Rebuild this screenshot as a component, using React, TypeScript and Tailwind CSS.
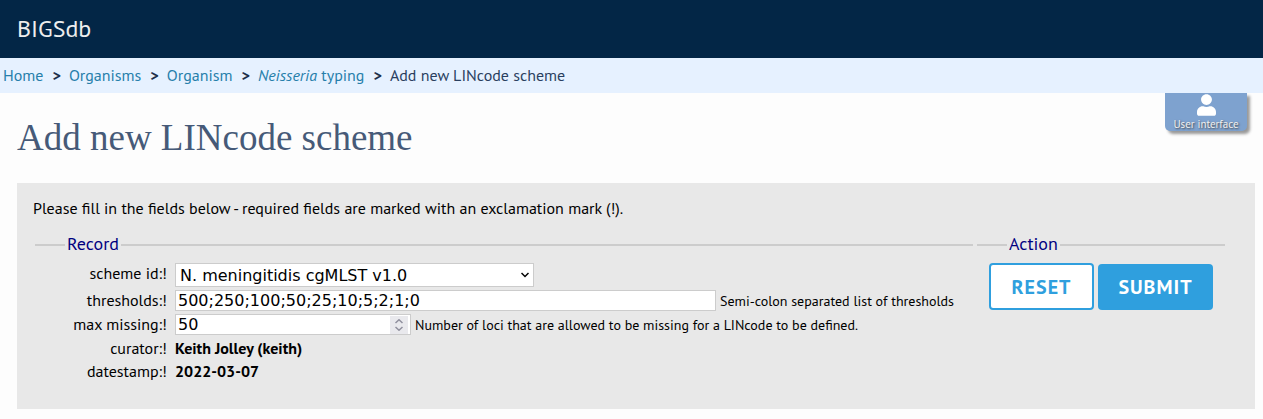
import type { ReactNode } from "react";
import { FaUser } from "react-icons/fa";

const crumbs: { label: ReactNode; key: string }[] = [
  { key: "home", label: "Home" },
  { key: "organisms", label: "Organisms" },
  { key: "organism", label: "Organism" },
  { key: "typing", label: <><i>Neisseria</i> typing</> },
];

function Row({ label, id, children }: { label: string; id?: string; children: ReactNode }) {
  const labelClass = "w-[132px] shrink-0 text-right leading-5";
  return (
    <div className="flex gap-2">
      {id ? (
        <label htmlFor={id} className={labelClass}>{label}:!</label>
      ) : (
        <span className={labelClass}>{label}:!</span>
      )}
      {children}
    </div>
  );
}

function Note({ children }: { children: ReactNode }) {
  return <span className="-ml-1 h-[21px] text-[14px] leading-[23px] whitespace-nowrap">{children}</span>;
}

function Fieldset({ title, className, children }: { title: string; className: string; children: ReactNode }) {
  return (
    <fieldset className={`min-w-0 border-t-2 border-[#ccc] ${className}`}>
      <legend className="ml-[30px] px-0.5 pb-0.5 text-[18px] leading-[22px] text-[#000080]">{title}</legend>
      {children}
    </fieldset>
  );
}

const field = "border border-[#ccc] bg-white font-['DejaVu_Sans',sans-serif] text-[16px] text-black outline-none";

export default function App() {
  return (
    <div className="min-h-screen bg-[#fdfdfd] font-['PT_Sans','Noto_Sans',sans-serif] text-[16px] text-black">
      <header className="flex h-[58px] items-center bg-[#032646] px-[17px] text-[24px] text-[#eee]">
        BIGSdb
      </header>
      <nav aria-label="Breadcrumb" className="flex h-[35px] items-center bg-[#e6f1ff] px-[3px] pb-0.5">
        {crumbs.map((c) => (
          <span key={c.key} className="flex">
            <a href="#" className="text-[#267fab]">{c.label}</a>
            <span className="pr-2 pl-[9px] font-semibold text-[#1e2f4a]">&gt;</span>
          </span>
        ))}
        <span className="text-[#2a3f5f]">Add new LINcode scheme</span>
      </nav>
      <main className="pr-2 pb-2.5 pl-[17px]">
        <div className="flex h-[90px] items-start justify-between pr-2">
          <h1 className="pt-6 font-['Liberation_Serif',serif] text-[37px] leading-[42px] text-[#465a78]">
            Add new LINcode scheme
          </h1>
          <a
            href="#"
            className="flex h-[38px] w-[82px] flex-col items-center rounded-b-[5px] bg-[#7ea2cf] pt-px text-[11px] leading-4 text-[#eee] shadow-[3px_3px_3px_#999] [text-shadow:1px_1px_2px_#444]"
          >
            <FaUser className="h-[22px] w-[19px] shrink-0 text-white" />
            <span className="whitespace-nowrap">User interface</span>
          </a>
        </div>
        <form className="bg-[#e8e8e8] pt-[15px] pr-[30px] pb-7 pl-4" onSubmit={(e) => e.preventDefault()}>
          <p className="leading-5">
            Please fill in the fields below - required fields are marked with an exclamation mark (!).
          </p>
          <div className="flex gap-1 pt-[15px] pl-0.5">
            <Fieldset title="Record" className="flex-1">
              <div className="flex flex-col gap-[3px] pt-1.5">
                <Row label="scheme id" id="scheme">
                  <span className="relative w-[359px]">
                    <select id="scheme" className={`${field} block h-6 w-full appearance-none pl-1`}>
                      <option>N. meningitidis cgMLST v1.0</option>
                    </select>
                    <svg
                      viewBox="0 0 8 6"
                      className="pointer-events-none absolute top-[9px] right-[5px] h-1.5 w-2"
                      fill="none"
                      stroke="#000"
                      strokeWidth="1.5"
                    >
                      <path d="M0.5 1 L4 4.5 L7.5 1" />
                    </svg>
                  </span>
                </Row>
                <Row label="thresholds" id="thresholds">
                  <input id="thresholds" className={`${field} h-[21px] w-[541px] px-0.5`} defaultValue="500;250;100;50;25;10;5;2;1;0" />
                  <Note>Semi-colon separated list of thresholds</Note>
                </Row>
                <Row label="max missing" id="missing">
                  <span className="relative w-[236px]">
                    <input
                      id="missing"
                      type="number"
                      defaultValue={50}
                      className={`${field} block h-[21px] w-full px-0.5 [appearance:textfield]`}
                    />
                    <span className="pointer-events-none absolute top-0.5 right-[3px] flex h-[18px] w-[18px] items-center justify-center bg-[#e9e9ed]">
                      <svg viewBox="0 0 8 12" className="h-3 w-2" fill="none" stroke="#8f8f9d" strokeWidth="1.5">
                        <path d="M0.5 4 L4 0.8 L7.5 4 M0.5 8 L4 11.2 L7.5 8" />
                      </svg>
                    </span>
                  </span>
                  <Note>Number of loci that are allowed to be missing for a LINcode to be defined.</Note>
                </Row>
                <Row label="curator">
                  <span className="leading-5 font-semibold">Keith Jolley (keith)</span>
                </Row>
                <Row label="datestamp">
                  <span className="leading-5 font-semibold">2022-03-07</span>
                </Row>
              </div>
            </Fieldset>
            <Fieldset title="Action" className="w-[248px] shrink-0">
              <div className="flex gap-1 pt-1.5 pl-3 text-[20px] leading-none font-bold tracking-wider">
                <button type="reset" className="h-[47px] w-[105px] rounded border-2 border-[#2f9fde] bg-white text-[#2f9fde]">
                  RESET
                </button>
                <button type="submit" className="mt-px h-[46px] w-[115px] rounded bg-[#2f9fde] text-white">
                  SUBMIT
                </button>
              </div>
            </Fieldset>
          </div>
        </form>
      </main>
    </div>
  );
}
